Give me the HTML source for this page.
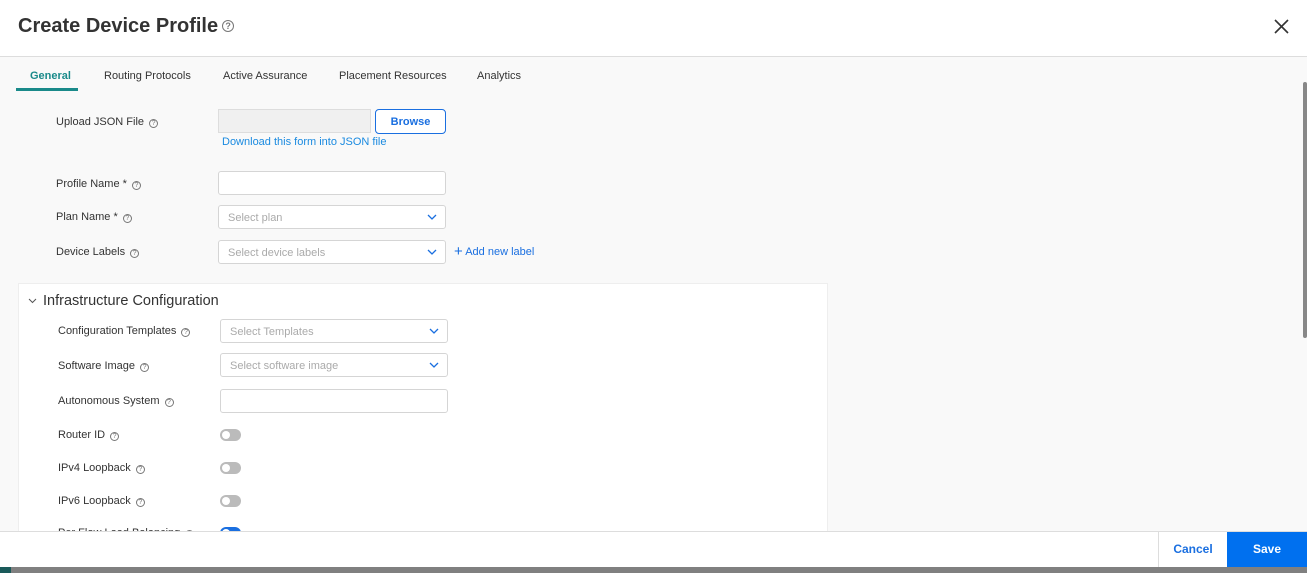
<!DOCTYPE html>
<html><head><style>
*{box-sizing:border-box;margin:0;padding:0}
body{width:1307px;height:573px;overflow:hidden;background:#f9f9f9;font-family:"Liberation Sans",sans-serif;color:#333;position:relative}
.a{position:absolute}
.lbl{position:absolute;font-size:11px;color:#333;white-space:nowrap}
.q{display:inline-block;width:9px;height:9px;border:1px solid #777;border-radius:50%;font-size:7px;line-height:7px;text-align:center;color:#777;margin-left:5px;vertical-align:0}
.in{position:absolute;height:24px;border:1px solid #d5d5d5;border-radius:3px;background:#fff;font-size:11px;color:#aaa;padding:6px 9px 4px}
.chev{position:absolute;right:8px;top:8px}
.tg{position:absolute;width:21px;height:12px;border-radius:6px;background:#bbb}
.tg:after{content:"";position:absolute;left:2px;top:2px;width:8px;height:8px;border-radius:50%;background:#fff}
</style></head><body>
<div class="a" style="left:0;top:0;width:1307px;height:57px;background:#fff;border-bottom:1px solid #ddd"></div>
<div class="a" style="left:18px;top:15px;font-size:20px;font-weight:bold;color:#333">Create Device Profile<span class="q" style="width:12px;height:12px;font-size:9px;line-height:10px;vertical-align:3px;margin-left:4px">?</span></div>
<svg class="a" style="left:1274px;top:19px" width="15" height="15" viewBox="0 0 15 15"><path d="M1 1L14 14M14 1L1 14" stroke="#333" stroke-width="1.6"/></svg>
<div class="a" style="left:30px;top:70px;font-size:11px;font-weight:bold;color:#1a8a8a">General</div>
<div class="a" style="left:16px;top:88px;width:62px;height:3px;background:#1a8a8a"></div>
<div class="a" style="left:104px;top:70px;font-size:11px">Routing Protocols</div>
<div class="a" style="left:223px;top:70px;font-size:11px">Active Assurance</div>
<div class="a" style="left:339px;top:70px;font-size:11px">Placement Resources</div>
<div class="a" style="left:477px;top:70px;font-size:11px">Analytics</div>

<div class="lbl" style="left:56px;top:116px">Upload JSON File<span class="q">?</span></div>
<div class="a" style="left:218px;top:109px;width:153px;height:24px;background:#f0f0f0;border:1px solid #ddd"></div>
<div class="a" style="left:375px;top:109px;width:71px;height:25px;border:1px solid #1a6fe0;border-radius:4px;background:#fff;color:#1a6fe0;font-size:11px;font-weight:bold;text-align:center;line-height:24px">Browse</div>
<div class="a" style="left:222px;top:136px;font-size:11px;color:#1a8ae0">Download this form into JSON file</div>

<div class="lbl" style="left:56px;top:178px">Profile Name *<span class="q">?</span></div>
<div class="in" style="left:218px;top:171px;width:228px"></div>
<div class="lbl" style="left:56px;top:211px">Plan Name *<span class="q">?</span></div>
<div class="in" style="left:218px;top:205px;width:228px">Select plan<svg class="chev" width="10" height="6"><path d="M1 1L5 5L9 1" stroke="#1a6fe0" fill="none" stroke-width="1.3"/></svg></div>
<div class="lbl" style="left:56px;top:246px">Device Labels<span class="q">?</span></div>
<div class="in" style="left:218px;top:240px;width:228px">Select device labels<svg class="chev" width="10" height="6"><path d="M1 1L5 5L9 1" stroke="#1a6fe0" fill="none" stroke-width="1.3"/></svg></div>
<div class="a" style="left:454px;top:243px;font-size:11px;color:#1a6fe0"><span style="font-size:15px;vertical-align:-1px">+</span> Add new label</div>

<div class="a" style="left:18px;top:283px;width:810px;height:260px;background:#fff;border:1px solid #eee"></div>
<svg class="a" style="left:28px;top:298px" width="9" height="6"><path d="M1 1L4.5 4.5L8 1" stroke="#555" fill="none" stroke-width="1"/></svg>
<div class="a" style="left:43px;top:293px;font-size:14.5px;color:#333">Infrastructure Configuration</div>
<div class="lbl" style="left:58px;top:325px">Configuration Templates<span class="q">?</span></div>
<div class="in" style="left:220px;top:319px;width:228px">Select Templates<svg class="chev" width="10" height="6"><path d="M1 1L5 5L9 1" stroke="#1a6fe0" fill="none" stroke-width="1.3"/></svg></div>
<div class="lbl" style="left:58px;top:360px">Software Image<span class="q">?</span></div>
<div class="in" style="left:220px;top:353px;width:228px">Select software image<svg class="chev" width="10" height="6"><path d="M1 1L5 5L9 1" stroke="#1a6fe0" fill="none" stroke-width="1.3"/></svg></div>
<div class="lbl" style="left:58px;top:395px">Autonomous System<span class="q">?</span></div>
<div class="in" style="left:220px;top:389px;width:228px"></div>
<div class="lbl" style="left:58px;top:429px">Router ID<span class="q">?</span></div>
<div class="tg" style="left:220px;top:429px"></div>
<div class="lbl" style="left:58px;top:462px">IPv4 Loopback<span class="q">?</span></div>
<div class="tg" style="left:220px;top:462px"></div>
<div class="lbl" style="left:58px;top:495px">IPv6 Loopback<span class="q">?</span></div>
<div class="tg" style="left:220px;top:495px"></div>
<div class="lbl" style="left:58px;top:527px">Per Flow Load Balancing<span class="q">?</span></div>
<div class="tg" style="left:220px;top:527px;background:#1a6fe0"></div>

<div class="a" style="left:1303px;top:82px;width:4px;height:256px;background:#888;border-radius:2px"></div>

<div class="a" style="left:0;top:531px;width:1307px;height:36px;background:#fff;border-top:1px solid #ddd"></div>
<div class="a" style="left:1158px;top:532px;width:1px;height:35px;background:#ddd"></div>
<div class="a" style="left:1159px;top:532px;width:68px;height:35px;color:#1a6fe0;font-size:12px;font-weight:bold;text-align:center;line-height:35px">Cancel</div>
<div class="a" style="left:1227px;top:532px;width:80px;height:35px;background:#0070ef;color:#fff;font-size:12px;font-weight:bold;text-align:center;line-height:35px">Save</div>
<div class="a" style="left:0;top:567px;width:1307px;height:6px;background:#808080"></div>
<div class="a" style="left:0;top:567px;width:11px;height:6px;background:#1a5a5a"></div>
</body></html>
